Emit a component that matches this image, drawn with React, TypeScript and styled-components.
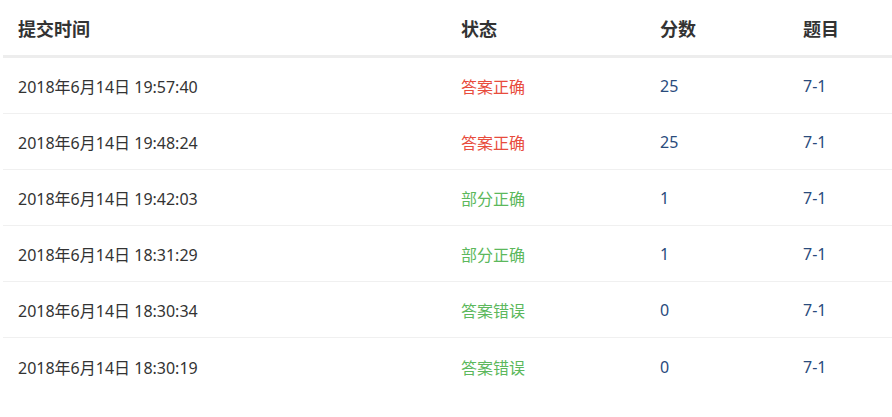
import React from "react";
import styled, { createGlobalStyle } from "styled-components";

const Global = createGlobalStyle`
  html, body { margin: 0; padding: 0; background: #fff; }
  body { font-family: "Noto Sans", "Noto Sans CJK SC", sans-serif; }
`;

const Table = styled.div`
  margin-left: 3px;
  width: 889px;
  display: grid;
  grid-template-columns: 443px 199px 143px 1fr;
`;

const HeadCell = styled.div`
  height: 55px;
  border-bottom: 3px solid #ededed;
  padding-left: 15px;
  display: flex;
  align-items: center;
  font-family: "Noto Sans CJK SC", sans-serif;
  font-weight: 700;
  font-size: 18px;
  color: #333;
`;

const Cell = styled.div<{ $color?: string; $cjk?: boolean }>`
  border-bottom: 1px solid #f0f0f0;
  padding-left: 15px;
  padding-top: 1px;
  box-sizing: border-box;
  height: 56px;
  display: flex;
  align-items: center;
  font-size: 16px;
  color: ${(p) => p.$color || "#333"};
  font-family: ${(p) => (p.$cjk ? `"Noto Sans CJK SC", sans-serif` : `"Noto Sans", "Noto Sans CJK SC", sans-serif`)};
`;

const LastCell = styled(Cell)`
  border-bottom: none;
`;

type Row = { time: string; status: string; score: number };

const rows: Row[] = [
  { time: "2018年6月14日 19:57:40", status: "答案正确", score: 25 },
  { time: "2018年6月14日 19:48:24", status: "答案正确", score: 25 },
  { time: "2018年6月14日 19:42:03", status: "部分正确", score: 1 },
  { time: "2018年6月14日 18:31:29", status: "部分正确", score: 1 },
  { time: "2018年6月14日 18:30:34", status: "答案错误", score: 0 },
  { time: "2018年6月14日 18:30:19", status: "答案错误", score: 0 },
];

const statusColor = (s: string) => (s === "答案正确" ? "#e84c3d" : "#5cb85c");

export default function App() {
  return (
    <>
      <Global />
      <Table>
        <HeadCell>提交时间</HeadCell>
        <HeadCell>状态</HeadCell>
        <HeadCell>分数</HeadCell>
        <HeadCell>题目</HeadCell>
        {rows.map((r, i) => {
          const C = i === rows.length - 1 ? LastCell : Cell;
          return (
            <React.Fragment key={i}>
              <C>{r.time}</C>
              <C $color={statusColor(r.status)} $cjk>
                {r.status}
              </C>
              <C $color="#2a4b7c">{r.score}</C>
              <C $color="#2a4b7c">7-1</C>
            </React.Fragment>
          );
        })}
      </Table>
    </>
  );
}
